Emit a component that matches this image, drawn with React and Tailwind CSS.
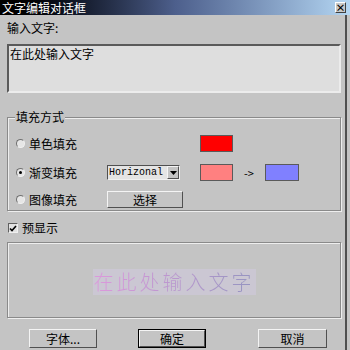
import React from "react";

const cn = "font-['Noto_Sans_CJK_SC','Noto_Sans_CJK_SC',sans-serif]";

const Radio = ({ checked }) => (
  <span className="w-[9px] h-[9px] rounded-full border border-t-[#707070] border-l-[#707070] border-b-[#f0f0f0] border-r-[#f0f0f0] bg-[#e6e6e6] flex items-center justify-center">
    {checked && <span className="w-[3px] h-[3px] rounded-full bg-black" />}
  </span>
);

const Btn = ({ children, def, w }) => (
  <div
    className={`${w} h-[19px] flex items-center justify-center text-[12px] leading-[14px] text-black ${
      def ? "border border-black" : ""
    }`}
  >
    <div className="w-full h-full flex items-center justify-center border border-t-[#f4f4f4] border-l-[#f4f4f4] border-b-[#505050] border-r-[#505050] bg-[#c4c4c4]">
      {children}
    </div>
  </div>
);

const Swatch = ({ color, w }) => (
  <div className={`${w} h-[17px] border border-[#5a5a5a] ${color}`} />
);

export default function App() {
  return (
    <div className={`w-[350px] h-[350px] bg-[#c4c4c4] overflow-hidden flex flex-col ${cn}`}>
      {/* title */}
      <div className="h-[15px] shrink-0 flex items-center justify-between bg-gradient-to-r from-black via-[#4d5f8c] to-[#b4d6f2] pl-[2px] pr-[4px]">
        <span className="text-white text-[12px] leading-[14px]">文字编辑对话框</span>
        <span className="w-[11px] h-[11px] bg-[#c8c8c8] border border-t-white border-l-white border-b-[#404040] border-r-[#404040] flex items-center justify-center text-[10px] leading-[10px] font-bold text-black">
          ×
        </span>
      </div>
      {/* body */}
      <div className="flex flex-1">
        <div className="w-[345px] flex flex-col px-[7px] text-[12px] leading-[14px] text-black">
          <div className="mt-[6px] h-[14px]">输入文字:</div>
          <div className="mt-[9px] h-[49px] w-[334px] border-2 border-t-[#5a5a5a] border-l-[#5a5a5a] border-b-[#ececec] border-r-[#ececec] bg-[#dedede] px-[1px] pt-[1px]">
            在此处输入文字
          </div>
          {/* group */}
          <div className="relative mt-[24px] h-[94px] w-[334px] border border-[#8a8a8a] shadow-[inset_1px_1px_0_#eeeeee,1px_1px_0_#eeeeee]">
            <span className="absolute -top-[8px] left-[7px] bg-[#c4c4c4] px-[1px]">填充方式</span>
            <div className="pt-[17px] pl-[8px] flex flex-col">
              <div className="h-[17px] flex items-center">
                <Radio />
                <span className="ml-[4px] w-[78px]">单色填充</span>
                <span className="w-[93px]" />
                <Swatch color="bg-[#ff0000]" w="w-[33px]" />
              </div>
              <div className="mt-[12px] h-[17px] flex items-center">
                <Radio checked />
                <span className="ml-[4px] w-[78px]">渐变填充</span>
                <div className="w-[73px] h-[15px] flex border border-t-[#505050] border-l-[#505050] border-b-[#f0f0f0] border-r-[#f0f0f0] bg-[#e4e4e4]">
                  <span className="flex-1 pl-[1px] font-['Liberation_Mono',monospace] text-[10px] leading-[13px]">
                    Horizonal
                  </span>
                  <span className="w-[12px] h-[13px] flex items-center justify-center bg-[#c4c4c4] border border-t-[#f4f4f4] border-l-[#f4f4f4] border-b-[#505050] border-r-[#505050]">
                    <svg width="7" height="4" viewBox="0 0 7 4">
                      <path d="M0 0H7L3.5 4Z" fill="#000" />
                    </svg>
                  </span>
                </div>
                <span className="w-[20px]" />
                <Swatch color="bg-[#ff8080]" w="w-[33px]" />
                <span className="ml-[11px] w-[12px] text-[11px]">-&gt;</span>
                <span className="w-[9px]" />
                <Swatch color="bg-[#8080ff]" w="w-[34px]" />
              </div>
              <div className="mt-[10px] h-[17px] flex items-center">
                <Radio />
                <span className="ml-[4px] w-[78px]">图像填充</span>
                <div className="w-[76px] h-[17px] flex items-center justify-center border border-t-[#f4f4f4] border-l-[#f4f4f4] border-b-[#505050] border-r-[#505050]">
                  选择
                </div>
              </div>
            </div>
          </div>
          {/* checkbox */}
          <div className="mt-[10px] h-[14px] flex items-center">
            <span className="ml-[1px] w-[10px] h-[10px] border border-t-[#606060] border-l-[#606060] border-b-[#f0f0f0] border-r-[#f0f0f0] bg-[#e2e2e2] flex items-center justify-center">
              <svg width="8" height="7" viewBox="0 0 8 7">
                <path d="M1 3.5L3 5.5L7 1" stroke="#000" strokeWidth="1.6" fill="none" />
              </svg>
            </span>
            <span className="ml-[4px]">预显示</span>
          </div>
          {/* preview */}
          <div className="mt-[7px] h-[76px] w-[334px] border border-[#8a8a8a] shadow-[inset_1px_1px_0_#eeeeee,1px_1px_0_#eeeeee] flex items-center justify-center">
            <span className="mt-[4px] bg-[#cbc7d3] px-[1px]">
              <span className="text-[20px] leading-[26px] tracking-[3px] font-light bg-gradient-to-r from-[#dd98dc] to-[#9494c0] bg-clip-text text-transparent">
                在此处输入文字
              </span>
            </span>
          </div>
          {/* buttons */}
          <div className="mt-[11px] flex pl-[22px]">
            <Btn w="w-[68px]">字体...</Btn>
            <span className="w-[41px]" />
            <Btn w="w-[68px]" def>
              确定
            </Btn>
            <span className="w-[52px]" />
            <Btn w="w-[69px]">取消</Btn>
          </div>
        </div>
        <div className="w-[2px] bg-[#505050]" />
      </div>
    </div>
  );
}
